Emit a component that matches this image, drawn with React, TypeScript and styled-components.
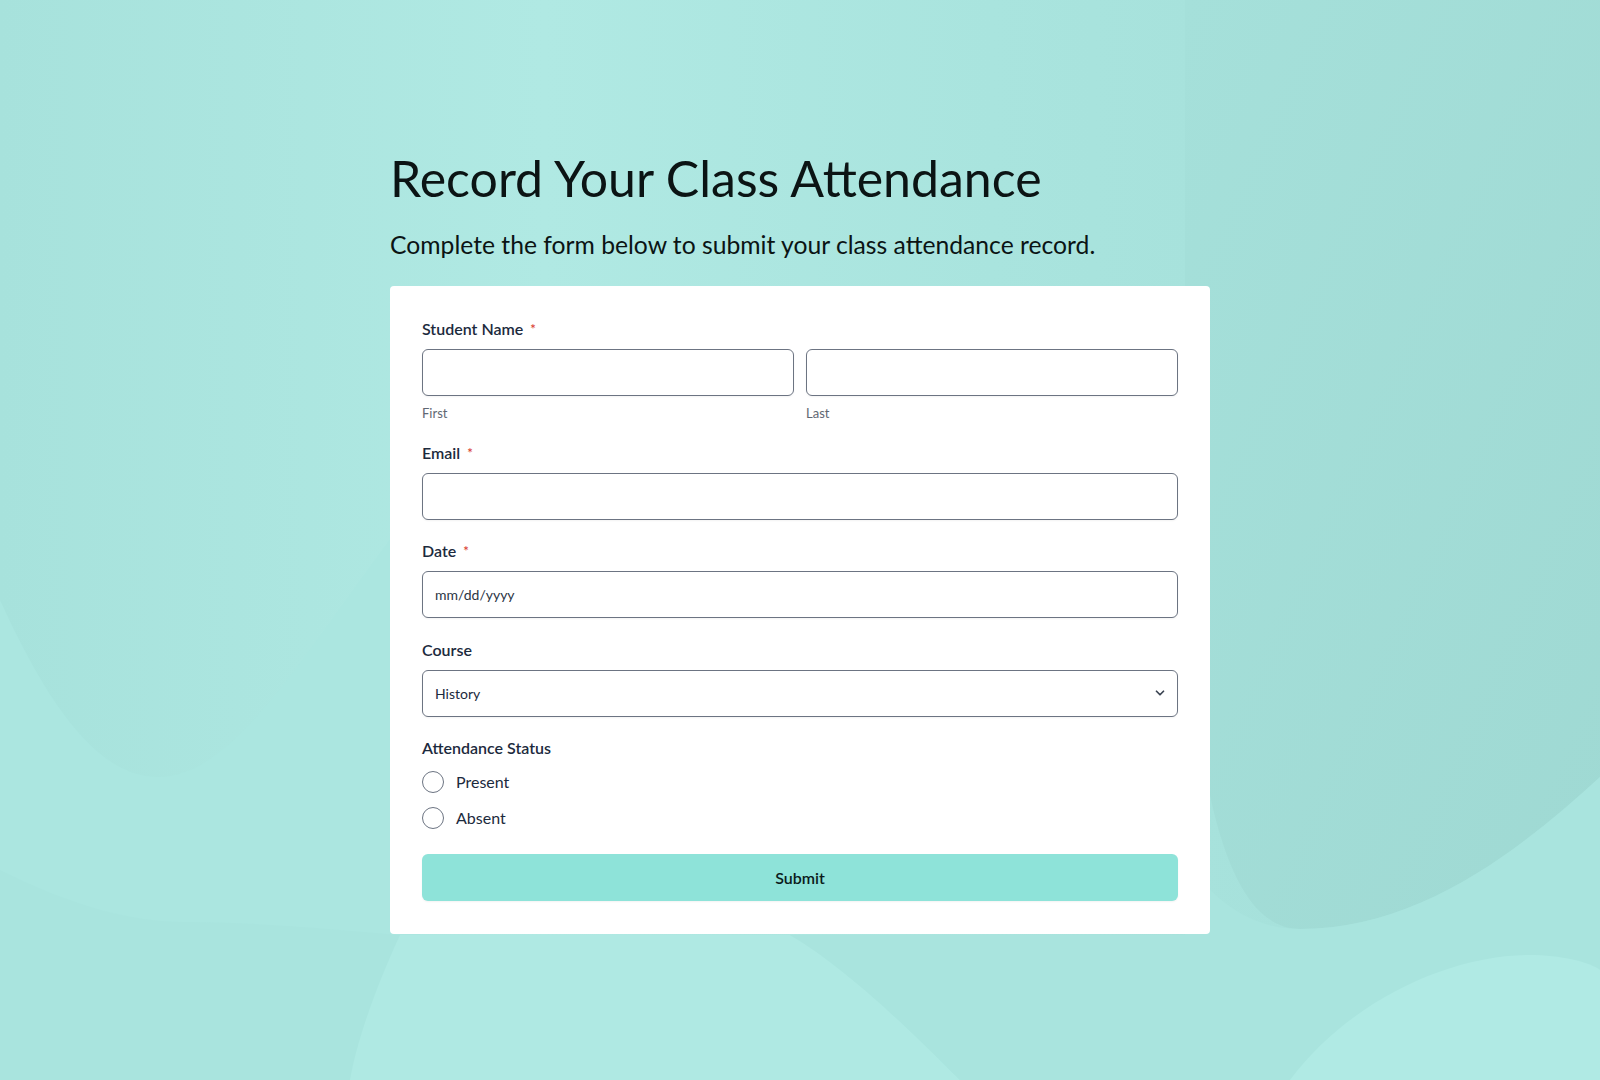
import React, { FunctionComponent } from 'react'
import styled, { createGlobalStyle } from 'styled-components'

const GlobalStyle = createGlobalStyle`
  * { box-sizing: border-box; }
  html, body {
    margin: 0;
    padding: 0;
    background: #abe6e0;
    font-family: Lato, 'Open Sans', sans-serif;
  }
`

const Page = styled.div`
  position: relative;
  min-height: 1080px;
  overflow: hidden;
  display: flex;
  justify-content: center;
`

const Backdrop = styled.svg`
  position: absolute;
  inset: 0;
  width: 100%;
  height: 100%;
  z-index: 0;
`

const Column = styled.main`
  position: relative;
  z-index: 1;
  width: 820px;
  padding-top: 146px;
`

const Title = styled.h1`
  margin: 0;
  font-size: 50px;
  font-weight: 400;
  line-height: 64px;
  color: #0b1414;
`

const Subtitle = styled.p`
  margin: 19px 0 0;
  font-size: 24.7px;
  line-height: 32px;
  color: #0b1414;
`

const Card = styled.form`
  margin-top: 25px;
  background: #ffffff;
  border-radius: 4px;
  padding: 33px 32px 33px;
  display: flex;
  flex-direction: column;
`

const Field = styled.div`
  display: flex;
  flex-direction: column;
  margin-bottom: 21.5px;
`

const Label = styled.label`
  font-size: 16px;
  font-weight: 600;
  line-height: 20px;
  color: #1c2a3d;
  margin-bottom: 10px;
`

const Required = styled.span`
  color: #d93f34;
  font-size: 13px;
  margin-left: 7px;
  vertical-align: 1px;
`

const NameRow = styled.div`
  display: grid;
  grid-template-columns: 1fr 1fr;
  column-gap: 12px;
`

const SubField = styled.div`
  display: flex;
  flex-direction: column;
`

const SubLabel = styled.span`
  margin-top: 9px;
  font-size: 13px;
  line-height: 16px;
  color: #5f6773;
`

const TextInput = styled.input`
  height: 47px;
  width: 100%;
  border: 1px solid #6c7482;
  border-radius: 6px;
  padding: 0 12px;
  font-family: inherit;
  font-size: 14px;
  color: #1c2a3d;
  background: #fff;
  box-shadow: 0 1px 2px rgba(0, 0, 0, 0.05);
  outline: none;

  &::placeholder {
    color: #2b3544;
  }
`

const SelectBox = styled.div`
  height: 47px;
  border: 1px solid #6c7482;
  border-radius: 6px;
  padding: 0 10px 0 12px;
  display: flex;
  align-items: center;
  justify-content: space-between;
  font-size: 14px;
  color: #1c2a3d;
  box-shadow: 0 1px 2px rgba(0, 0, 0, 0.05);
`

const RadioList = styled.div`
  display: flex;
  flex-direction: column;
  gap: 14px;
  margin-top: 3px;
`

const RadioRow = styled.label`
  display: flex;
  align-items: center;
  gap: 12px;
  font-size: 16px;
  line-height: 22px;
  color: #1c2a3d;
`

const RadioCircle = styled.span`
  width: 22px;
  height: 22px;
  border-radius: 50%;
  border: 1px solid #6c7482;
  background: #fff;
`

const SubmitButton = styled.button`
  margin-top: 3.5px;
  height: 47px;
  border: none;
  border-radius: 6px;
  background: #8ee3d9;
  font-family: inherit;
  font-size: 16px;
  font-weight: 600;
  color: #0b1b1b;
  box-shadow: 0 1px 2px rgba(0, 0, 0, 0.05);
`

const Chevron: FunctionComponent = () =>
  <svg width='14' height='14' viewBox='0 0 24 24' fill='none' stroke='#3b4452' strokeWidth='3' strokeLinecap='round' strokeLinejoin='round'>
    <path d='M6 9l6 6 6-6' />
  </svg>

const Background: FunctionComponent = () =>
  <Backdrop viewBox='0 0 1600 1080' preserveAspectRatio='none'>
    <defs>
      <linearGradient id='base' x1='0' y1='0' x2='1' y2='0'>
        <stop offset='0' stopColor='#a7e2dc' />
        <stop offset='0.34' stopColor='#b0e9e3' />
        <stop offset='0.62' stopColor='#a9e4de' />
        <stop offset='1' stopColor='#a3ded8' />
      </linearGradient>
      <linearGradient id='rightBlob' x1='0' y1='0' x2='1' y2='1'>
        <stop offset='0' stopColor='#a5e0da' />
        <stop offset='1' stopColor='#9fd9d3' />
      </linearGradient>
    </defs>
    <rect width='1600' height='1080' fill='url(#base)' />
    <path d='M0 600 C50 710 100 777 158 777 C240 777 310 640 420 500 L420 1080 L0 1080 Z' fill='#abe6e0' />
    <path d='M0 870 C70 905 130 922 185 922 C260 922 340 930 420 937 L420 1080 L0 1080 Z' fill='#a9e4de' />
    <path d='M400 935 C370 1000 355 1050 350 1080 H960 C920 1040 850 970 790 935 Z' fill='#afe9e3' />
    <path d='M1185 560 C1195 800 1230 929 1300 929 C1420 929 1520 850 1600 777 V0 H1185 Z' fill='url(#rightBlob)' />
    <path d='M1185 860 C1220 910 1260 929 1300 929 C1420 929 1520 850 1600 777 V1080 H960 C920 1040 850 970 790 935 H1185 Z' fill='#a9e4de' />
    <path d='M1290 1080 C1350 1000 1450 955 1530 955 C1560 955 1590 962 1600 970 V1080 Z' fill='#b0eae4' />
  </Backdrop>

const App: FunctionComponent = () =>
  <>
    <GlobalStyle />
    <Page>
      <Background />
      <Column>
        <Title>Record Your Class Attendance</Title>
        <Subtitle>Complete the form below to submit your class attendance record.</Subtitle>
        <Card onSubmit={e => e.preventDefault()}>
          <Field>
            <Label>Student Name<Required>*</Required></Label>
            <NameRow>
              <SubField>
                <TextInput type='text' />
                <SubLabel>First</SubLabel>
              </SubField>
              <SubField>
                <TextInput type='text' />
                <SubLabel>Last</SubLabel>
              </SubField>
            </NameRow>
          </Field>
          <Field>
            <Label>Email<Required>*</Required></Label>
            <TextInput type='email' />
          </Field>
          <Field>
            <Label>Date<Required>*</Required></Label>
            <TextInput type='text' placeholder='mm/dd/yyyy' />
          </Field>
          <Field>
            <Label>Course</Label>
            <SelectBox>
              <span>History</span>
              <Chevron />
            </SelectBox>
          </Field>
          <Field>
            <Label>Attendance Status</Label>
            <RadioList>
              <RadioRow><RadioCircle />Present</RadioRow>
              <RadioRow><RadioCircle />Absent</RadioRow>
            </RadioList>
          </Field>
          <SubmitButton type='submit'>Submit</SubmitButton>
        </Card>
      </Column>
    </Page>
  </>

export default App
